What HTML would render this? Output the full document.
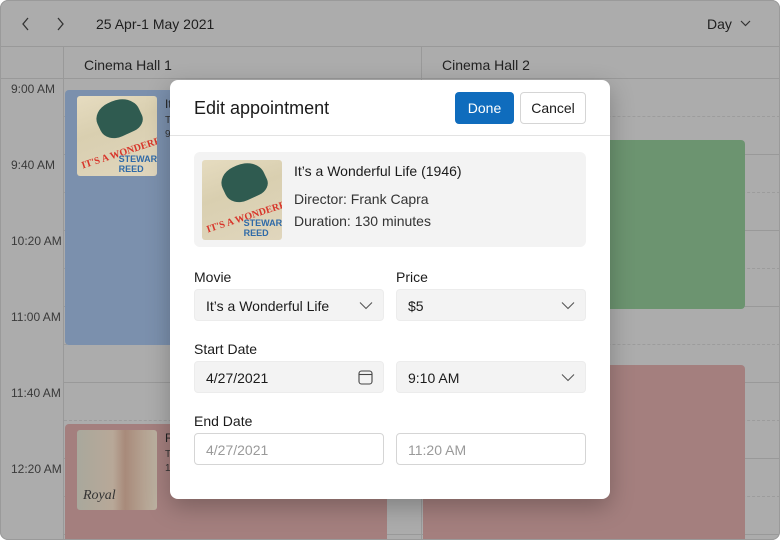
<!DOCTYPE html>
<html><head><meta charset="utf-8"><style>
*{box-sizing:border-box;margin:0;padding:0}
body{width:780px;height:540px;overflow:hidden;background:#fff;font-family:"Liberation Sans","DejaVu Sans",sans-serif;color:#1b1b1b;position:relative}
.frame{position:absolute;left:0;top:0;width:780px;height:540px;background:#acacac;border-radius:8px;overflow:hidden}
.bord{position:absolute;left:0;top:0;width:780px;height:540px;border:1px solid #9a9a9a;border-radius:8px;pointer-events:none}
.a{position:absolute}
.hl{position:absolute;height:1px;background:#999;left:0;right:0}
.dl{position:absolute;height:0;border-top:1px dashed #9c9c9c;left:64px;right:0}
.time{position:absolute;left:11px;font-size:12px;color:#3a3a3a}
.poster{position:absolute;border-radius:3px;background:linear-gradient(160deg,#e6dcc0 0%,#d9cfb0 40%,#e0d6bd 100%);overflow:hidden}
.poster .p1{position:absolute;left:25%;top:5%;width:55%;height:45%;background:#2f5b50;border-radius:40% 50% 30% 40%;transform:rotate(-25deg)}
.poster .p2{position:absolute;left:3%;top:58%;font:bold 10px "Liberation Serif",serif;color:#d8352a;transform:rotate(-18deg);white-space:nowrap}
.poster .p3{position:absolute;left:52%;top:72%;font:bold 9px "Liberation Sans",sans-serif;color:#2f6aa8;line-height:10px}
.dlg{position:absolute;left:170px;top:80px;width:440px;height:419px;background:#fff;border-radius:8px;box-shadow:0 8px 24px rgba(0,0,0,.25)}
.lbl{position:absolute;font-size:14px;color:#1b1b1b}
.inp{position:absolute;height:32px;border-radius:4px;background:#f3f3f3;font-size:14px;padding:0 11px;line-height:32px;border:1px solid #ececec}
.inp.w{background:#fff;border:1px solid #d5d5d5;color:#9a9a9a}
.chev{position:absolute;right:10px;top:11px}
</style></head><body>
<div class="frame">
  <svg class="a" style="left:20px;top:17px" width="12" height="14"><path d="M8 1 L3 7 L8 13" fill="none" stroke="#333" stroke-width="1.3"/></svg>
  <svg class="a" style="left:54px;top:17px" width="12" height="14"><path d="M4 1 L9 7 L4 13" fill="none" stroke="#333" stroke-width="1.3"/></svg>
  <div class="a" style="left:96px;top:16px;font-size:14px;color:#1f1f1f">25 Apr-1 May 2021</div>
  <div class="a" style="left:707px;top:16px;font-size:14px;color:#1f1f1f">Day</div>
  <svg class="a" style="left:740px;top:20px" width="11" height="7"><path d="M1 1 L5.5 5.5 L10 1" fill="none" stroke="#333" stroke-width="1.2"/></svg>
  <div class="hl" style="top:46px"></div>
  <div class="hl" style="top:78px"></div>
  <div class="a" style="left:63px;top:46px;width:1px;height:500px;background:#999"></div>
  <div class="a" style="left:421px;top:46px;width:1px;height:500px;background:#999"></div>
  <div class="a" style="left:84px;top:57px;font-size:14px;color:#222">Cinema Hall 1</div>
  <div class="a" style="left:442px;top:57px;font-size:14px;color:#222">Cinema Hall 2</div>
  <div class="hl" style="top:154px;left:0"></div><div class="hl" style="top:230px"></div><div class="hl" style="top:306px"></div><div class="hl" style="top:382px"></div><div class="hl" style="top:458px"></div><div class="hl" style="top:534px"></div>
  <div class="dl" style="top:116px"></div><div class="dl" style="top:192px"></div><div class="dl" style="top:268px"></div><div class="dl" style="top:344px"></div><div class="dl" style="top:420px"></div><div class="dl" style="top:496px"></div>
  <div class="a" style="left:0;top:79px;width:63px;height:460px;background:#acacac"></div>
  <div class="a" style="left:63px;top:79px;width:1px;height:460px;background:#999"></div>
  <div class="time" style="top:82px">9:00 AM</div>
  <div class="time" style="top:158px">9:40 AM</div>
  <div class="time" style="top:234px">10:20 AM</div>
  <div class="time" style="top:310px">11:00 AM</div>
  <div class="time" style="top:386px">11:40 AM</div>
  <div class="time" style="top:462px">12:20 AM</div>
  <div class="a" style="left:65px;top:90px;width:322px;height:255px;background:#7b90ad;border-radius:4px"></div>
  <div class="poster" style="left:77px;top:96px;width:80px;height:80px"><div class="p1"></div><div class="p2">IT'S A WONDERFUL LIFE</div><div class="p3">STEWART<br>REED</div></div>
  <div class="a" style="left:165px;top:97px;font-size:12px;color:#222">It's</div>
  <div class="a" style="left:165px;top:115px;font-size:10px;color:#333">T</div>
  <div class="a" style="left:165px;top:129px;font-size:10px;color:#333">9</div>
  <div class="a" style="left:65px;top:424px;width:322px;height:120px;background:#a47f7e;border-radius:4px"></div>
  <div class="a" style="left:77px;top:430px;width:80px;height:80px;border-radius:3px;background:linear-gradient(90deg,#a9a89c 0%,#b8a898 45%,#a88a7a 60%,#bdb3a2 100%)"><div class="a" style="left:6px;top:58px;font:italic 14px 'Liberation Serif',serif;color:#333">Royal</div></div>
  <div class="a" style="left:165px;top:431px;font-size:12px;color:#222">R</div>
  <div class="a" style="left:165px;top:449px;font-size:10px;color:#333">T</div>
  <div class="a" style="left:165px;top:463px;font-size:10px;color:#333">1</div>
  <div class="a" style="left:423px;top:140px;width:322px;height:169px;background:#6c9470;border-radius:4px"></div>
  <div class="a" style="left:423px;top:365px;width:322px;height:180px;background:#a47f7e;border-radius:4px"></div>
</div>
<div class="bord"></div>
<div class="dlg">
  <div class="a" style="left:24px;top:18px;font-size:18px;color:#1b1b1b">Edit appointment</div>
  <div class="a" style="left:285px;top:12px;width:59px;height:32px;background:#0f6cbd;border-radius:4px;color:#fff;font-size:14px;text-align:center;line-height:32px">Done</div>
  <div class="a" style="left:350px;top:12px;width:66px;height:32px;border:1px solid #d5d5d5;border-radius:4px;font-size:14px;text-align:center;line-height:30px">Cancel</div>
  <div class="a" style="left:0;top:55px;width:440px;height:1px;background:#e3e3e3"></div>
  <div class="a" style="left:24px;top:72px;width:392px;height:95px;background:#f3f3f3;border-radius:6px"></div>
  <div class="poster" style="left:32px;top:80px;width:80px;height:80px"><div class="p1"></div><div class="p2">IT'S A WONDERFUL LIFE</div><div class="p3">STEWART<br>REED</div></div>
  <div class="a" style="left:124px;top:83px;font-size:14px">It’s a Wonderful Life (1946)</div>
  <div class="a" style="left:124px;top:111px;font-size:14px;color:#333">Director: Frank Capra</div>
  <div class="a" style="left:124px;top:133px;font-size:14px;color:#333">Duration: 130 minutes</div>
  <div class="lbl" style="left:24px;top:189px">Movie</div>
  <div class="lbl" style="left:226px;top:189px">Price</div>
  <div class="inp" style="left:24px;top:209px;width:190px">It’s a Wonderful Life<svg class="chev" width="14" height="9"><path d="M1 1.5 L7 7.5 L13 1.5" fill="none" stroke="#555" stroke-width="1.1"/></svg></div>
  <div class="inp" style="left:226px;top:209px;width:190px">$5<svg class="chev" width="14" height="9"><path d="M1 1.5 L7 7.5 L13 1.5" fill="none" stroke="#555" stroke-width="1.1"/></svg></div>
  <div class="lbl" style="left:24px;top:261px">Start Date</div>
  <div class="inp" style="left:24px;top:281px;width:190px">4/27/2021<svg class="a" style="right:10px;top:8px" width="15" height="15"><rect x="1" y="1" width="13" height="13" rx="2.5" fill="none" stroke="#444" stroke-width="1.1"/><path d="M1 4.5 H14" stroke="#444" stroke-width="1.1"/></svg></div>
  <div class="inp" style="left:226px;top:281px;width:190px">9:10 AM<svg class="chev" width="14" height="9"><path d="M1 1.5 L7 7.5 L13 1.5" fill="none" stroke="#555" stroke-width="1.1"/></svg></div>
  <div class="lbl" style="left:24px;top:333px">End Date</div>
  <div class="inp w" style="left:24px;top:353px;width:190px">4/27/2021</div>
  <div class="inp w" style="left:226px;top:353px;width:190px">11:20 AM</div>
</div>
</body></html>
